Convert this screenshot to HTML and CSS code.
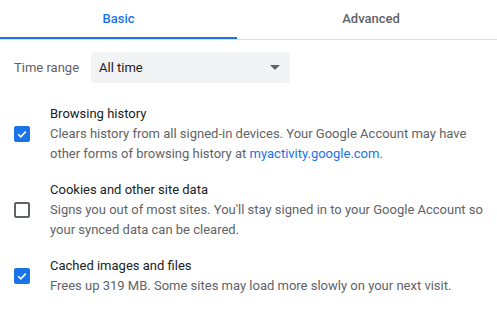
FILE: index.html
```html
<!DOCTYPE html>
<html>

<head>
    <title>Clear browsing data</title>
    <link rel="stylesheet" href="styles.css">
</head>

<body>
    <div class="tabs">
        <div class="tab active">Basic</div>
        <div class="tab">Advanced</div>
    </div>

    <div class="range-row">
        <span class="range-label">Time range</span>
        <div class="select">
            <span>All time</span>
            <span class="arrow"></span>
        </div>
    </div>

    <div class="item">
        <div class="box checked">
            <svg width="12" height="12" viewBox="0 0 12 12"><path d="M2.2 6.2 L4.8 8.8 L9.8 3.6" fill="none" stroke="#fff" stroke-width="1.6"/></svg>
        </div>
        <div class="text">
            <div class="title">Browsing history</div>
            <div class="desc">Clears history from all signed-in devices. Your Google Account may have other forms of browsing history at <a href="#">myactivity.google.com</a>.</div>
        </div>
    </div>

    <div class="item">
        <div class="box"></div>
        <div class="text">
            <div class="title">Cookies and other site data</div>
            <div class="desc">Signs you out of most sites. You'll stay signed in to your Google Account so your synced data can be cleared.</div>
        </div>
    </div>

    <div class="item">
        <div class="box checked">
            <svg width="12" height="12" viewBox="0 0 12 12"><path d="M2.2 6.2 L4.8 8.8 L9.8 3.6" fill="none" stroke="#fff" stroke-width="1.6"/></svg>
        </div>
        <div class="text">
            <div class="title">Cached images and files</div>
            <div class="desc">Frees up 319 MB. Some sites may load more slowly on your next visit.</div>
        </div>
    </div>
</body>

</html>
```

FILE: styles.css
```css
body {
    font-family: Roboto, "Liberation Sans", sans-serif;
    font-size: 13px;
    color: #202124;
    background-color: #fff;
    margin: 0;
}

.tabs {
    display: flex;
    border-bottom: 1px solid #dadce0;
    height: 39px;
}

.tab {
    flex: 1;
    text-align: center;
    line-height: 37px;
    font-weight: 500;
    color: #5f6368;
    padding-left: 8px;
}

.tab.active {
    flex: 0 0 237px;
    padding-left: 0;
    color: #1a73e8;
    border-bottom: 2px solid #1a73e8;
}

.range-row {
    display: flex;
    align-items: center;
    padding: 12px 14px 0;
}

.range-label {
    color: #5f6368;
    width: 77px;
}

.select {
    display: flex;
    align-items: center;
    justify-content: space-between;
    width: 199px;
    height: 31px;
    box-sizing: border-box;
    padding: 0 8px;
    background-color: #f1f3f4;
    border-radius: 4px;
}

.arrow {
    width: 0;
    height: 0;
    border-left: 5px solid transparent;
    border-right: 5px solid transparent;
    border-top: 5px solid #5f6368;
    margin-right: 2px;
}

.item {
    display: flex;
    align-items: center;
    padding: 8px 14px;
}

.range-row + .item {
    margin-top: 13px;
}

.box {
    flex: 0 0 16px;
    height: 16px;
    box-sizing: border-box;
    border: 2px solid #5f6368;
    border-radius: 2px;
    margin-right: 20px;
    display: flex;
    align-items: center;
    justify-content: center;
}

.box.checked {
    background-color: #1a73e8;
    border-color: #1a73e8;
}

.text {
    line-height: 20px;
}

.desc {
    color: #5f6368;
}

.desc a {
    color: #1a73e8;
    text-decoration: none;
}
```
